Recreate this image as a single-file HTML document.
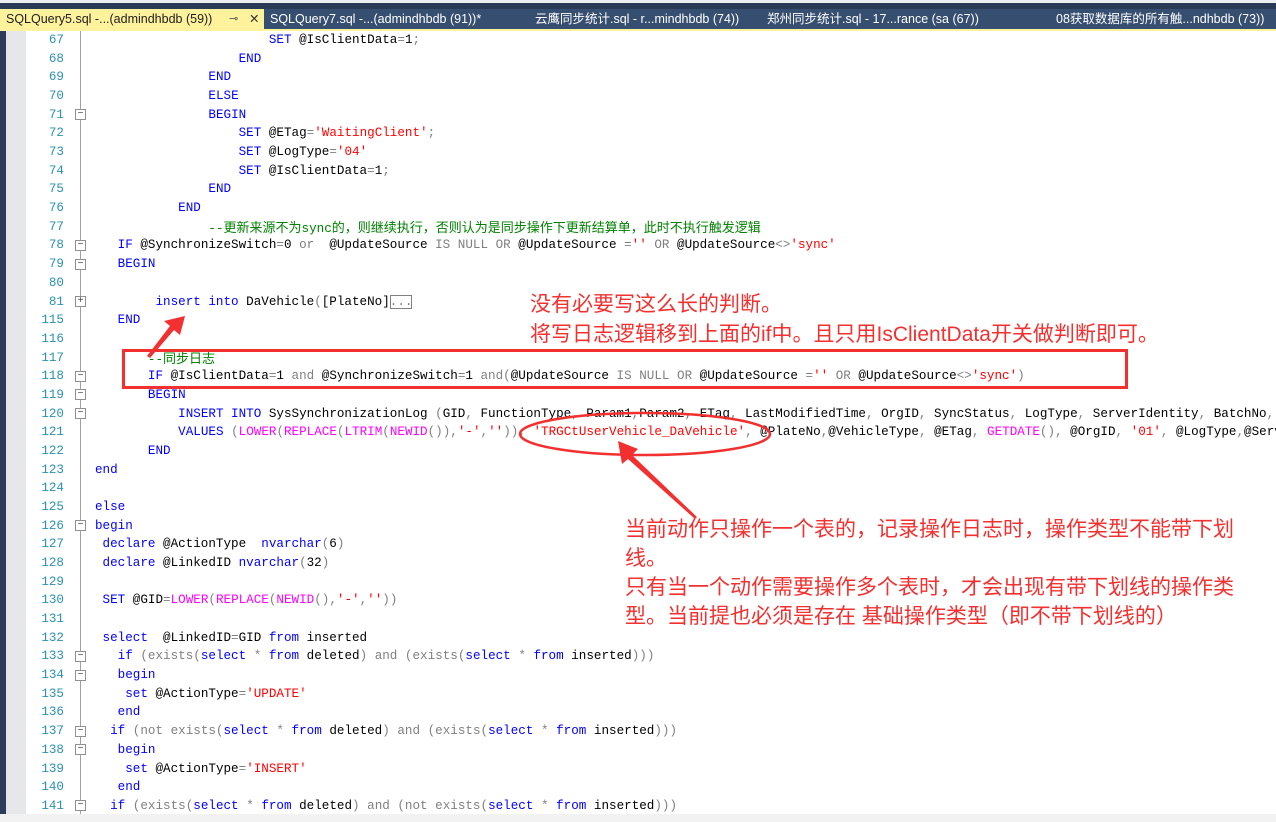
<!DOCTYPE html>
<html><head><meta charset="utf-8">
<style>
*{margin:0;padding:0;box-sizing:border-box}
html,body{width:1276px;height:822px;overflow:hidden;background:#fff}
body{position:relative;font-family:"Liberation Mono","Noto Sans CJK SC",monospace}
#top{position:absolute;left:0;top:0;width:1276px;height:3px;background:#eeeef2}
#nav{position:absolute;left:0;top:3px;width:1276px;height:6px;background:#293b56}
#tabs{position:absolute;left:0;top:9px;width:1276px;height:20px;background:#364e6f;font-family:"Liberation Sans","Noto Sans CJK SC",sans-serif;font-size:12.5px;color:#fff}
#tabs span{position:absolute;top:0;height:20px;line-height:20px;white-space:nowrap}
#act{position:absolute;left:0;top:0;width:264px;height:20px;background:#fff29d;color:#1e1e1e}
#yl{position:absolute;left:0;top:29px;width:1276px;height:2px;background:#fff29d}
#dark{position:absolute;left:0;top:31px;width:6px;height:783px;background:#2d3c5a}
#gut{position:absolute;left:6px;top:31px;width:20px;height:783px;background:#e6e7e8}
#bot{position:absolute;left:0;top:814px;width:1276px;height:8px;background:#f2f2f2}
#vl{position:absolute;left:80px;top:31px;width:1px;height:783px;background:#a0a0a0}
#code{position:absolute;left:0;top:0;width:1276px;height:814px;overflow:hidden}
.ln{position:absolute;left:26px;width:38px;text-align:right;color:#2b91af;font-size:12.6px;line-height:18px;font-family:"Liberation Mono",monospace}
.fb{position:absolute;left:75px;width:11px;height:11px;border:1px solid #909090;background:#fff;font-size:10px;line-height:8px;text-align:center;color:#444;font-family:"Liberation Sans",sans-serif}
.cl{position:absolute;left:95px;font-size:12.6px;line-height:18px;white-space:pre;color:#000}
.k{color:#0000ff}.g{color:#808080}.s{color:#ff0000}.f{color:#ff00ff}.c{color:#008000}
.cj{font-family:"Noto Sans CJK SC",sans-serif;font-size:13px}
.ann{position:absolute;font-family:"Liberation Sans","Noto Sans CJK SC",sans-serif;font-size:21px;color:#f2302f;white-space:nowrap;line-height:26px}
</style></head><body>
<div id="top"></div><div id="nav"></div>
<div id="tabs">
<div id="act"></div>
<span style="left:6px;color:#1e1e1e">SQLQuery5.sql -...(admindhbdb (59))</span>
<span style="left:229px;color:#555;font-size:11px">⊸</span>
<span style="left:249px;color:#333">✕</span>
<span style="left:270px">SQLQuery7.sql -...(admindhbdb (91))*</span>
<span style="left:535px">云鹰同步统计.sql - r...mindhbdb (74))</span>
<span style="left:767px">郑州同步统计.sql - 17...rance (sa (67))</span>
<span style="left:1056px">08获取数据库的所有触...ndhbdb (73))</span>
</div>
<div id="yl"></div>
<div id="dark"></div><div id="gut"></div>
<div id="vl"></div>
<div id="code"></div>
<div id="bot"></div>

<div class="ann" style="left:530px;top:292px">没有必要写这么长的判断。</div>
<div class="ann" style="left:530px;top:322px">将写日志逻辑移到上面的if中。且只用IsClientData开关做判断即可。</div>
<div class="ann" style="left:625px;top:517px">当前动作只操作一个表的，记录操作日志时，操作类型不能带下划</div>
<div class="ann" style="left:625px;top:546px">线。</div>
<div class="ann" style="left:625px;top:575px">只有当一个动作需要操作多个表时，才会出现有带下划线的操作类</div>
<div class="ann" style="left:625px;top:604px">型。当前提也必须是存在 基础操作类型（即不带下划线的）</div>

<svg style="position:absolute;left:0;top:0" width="1276" height="822">
<rect x="123.5" y="350.5" width="1003" height="37" fill="none" stroke="#f2302f" stroke-width="3"/>
<ellipse cx="645" cy="434" rx="125" ry="21" fill="none" stroke="#f2302f" stroke-width="2.5"/>
<polygon points="185,316 180,335 174,330 150,358 147,356 170,326 164,321" fill="#f2302f"/>
<polygon points="618,441 638,449 632,455 697,517 695,519 628,459 622,464" fill="#f2302f"/>
</svg>

<script>
const L=[
[67,23,'<span class="k">SET</span> @IsClientData<span class="g">=</span>1<span class="g">;</span>'],
[68,19,'<span class="k">END</span>'],
[69,15,'<span class="k">END</span>'],
[70,15,'<span class="k">ELSE</span>'],
[71,15,'<span class="k">BEGIN</span>','-'],
[72,19,'<span class="k">SET</span> @ETag<span class="g">=</span><span class="s">\'WaitingClient\'</span><span class="g">;</span>'],
[73,19,'<span class="k">SET</span> @LogType<span class="g">=</span><span class="s">\'04\'</span>'],
[74,19,'<span class="k">SET</span> @IsClientData<span class="g">=</span>1<span class="g">;</span>'],
[75,15,'<span class="k">END</span>'],
[76,11,'<span class="k">END</span>'],
[77,15,'<span class="c">--<span class="cj">更新来源不为</span>sync<span class="cj">的，则继续执行，否则认为是同步操作下更新结算单，此时不执行触发逻辑</span></span>'],
[78,3,'<span class="k">IF</span> @SynchronizeSwitch<span class="g">=</span>0 <span class="g">or</span>  @UpdateSource <span class="g">IS NULL OR</span> @UpdateSource <span class="g">=</span><span class="s">\'\'</span> <span class="g">OR</span> @UpdateSource<span class="g">&lt;&gt;</span><span class="s">\'sync\'</span>','-'],
[79,3,'<span class="k">BEGIN</span>','-'],
[80,0,''],
[81,8,'<span class="k">insert into</span> DaVehicle<span class="g">(</span>[PlateNo]<span style="outline:1px solid #808080;outline-offset:-1px;color:#808080">...</span>','+'],
[115,3,'<span class="k">END</span>'],
[116,0,''],
[117,7,'<span class="c">--<span class="cj">同步日志</span></span>'],
[118,7,'<span class="k">IF</span> @IsClientData<span class="g">=</span>1 <span class="g">and</span> @SynchronizeSwitch<span class="g">=</span>1 <span class="g">and(</span>@UpdateSource <span class="g">IS NULL OR</span> @UpdateSource <span class="g">=</span><span class="s">\'\'</span> <span class="g">OR</span> @UpdateSource<span class="g">&lt;&gt;</span><span class="s">\'sync\'</span><span class="g">)</span>','-'],
[119,7,'<span class="k">BEGIN</span>','-'],
[120,11,'<span class="k">INSERT INTO</span> SysSynchronizationLog <span class="g">(</span>GID<span class="g">,</span> FunctionType<span class="g">,</span> Param1<span class="g">,</span>Param2<span class="g">,</span> ETag<span class="g">,</span> LastModifiedTime<span class="g">,</span> OrgID<span class="g">,</span> SyncStatus<span class="g">,</span> LogType<span class="g">,</span> ServerIdentity<span class="g">,</span> BatchNo<span class="g">,</span>','-'],
[121,11,'<span class="k">VALUES</span> <span class="g">(</span><span class="f">LOWER</span><span class="g">(</span><span class="f">REPLACE</span><span class="g">(</span><span class="f">LTRIM</span><span class="g">(</span><span class="f">NEWID</span><span class="g">()),</span><span class="s">\'-\'</span><span class="g">,</span><span class="s">\'\'</span><span class="g">)),</span> <span class="s">\'TRGCtUserVehicle_DaVehicle\'</span><span class="g">,</span> @PlateNo<span class="g">,</span>@VehicleType<span class="g">,</span> @ETag<span class="g">,</span> <span class="f">GETDATE</span><span class="g">(),</span> @OrgID<span class="g">,</span> <span class="s">\'01\'</span><span class="g">,</span> @LogType<span class="g">,</span>@ServerIdentity'],
[122,7,'<span class="k">END</span>'],
[123,0,'<span class="k">end</span>'],
[124,0,''],
[125,0,'<span class="k">else</span>'],
[126,0,'<span class="k">begin</span>','-'],
[127,1,'<span class="k">declare</span> @ActionType  <span class="k">nvarchar</span><span class="g">(</span>6<span class="g">)</span>'],
[128,1,'<span class="k">declare</span> @LinkedID <span class="k">nvarchar</span><span class="g">(</span>32<span class="g">)</span>'],
[129,0,''],
[130,1,'<span class="k">SET</span> @GID<span class="g">=</span><span class="f">LOWER</span><span class="g">(</span><span class="f">REPLACE</span><span class="g">(</span><span class="f">NEWID</span><span class="g">(),</span><span class="s">\'-\'</span><span class="g">,</span><span class="s">\'\'</span><span class="g">))</span>'],
[131,0,''],
[132,1,'<span class="k">select</span>  @LinkedID<span class="g">=</span>GID <span class="k">from</span> inserted'],
[133,3,'<span class="k">if</span> <span class="g">(exists(</span><span class="k">select</span> <span class="g">*</span> <span class="k">from</span> deleted<span class="g">) and (exists(</span><span class="k">select</span> <span class="g">*</span> <span class="k">from</span> inserted<span class="g">)))</span>','-'],
[134,3,'<span class="k">begin</span>','-'],
[135,4,'<span class="k">set</span> @ActionType<span class="g">=</span><span class="s">\'UPDATE\'</span>'],
[136,3,'<span class="k">end</span>'],
[137,2,'<span class="k">if</span> <span class="g">(not exists(</span><span class="k">select</span> <span class="g">*</span> <span class="k">from</span> deleted<span class="g">) and (exists(</span><span class="k">select</span> <span class="g">*</span> <span class="k">from</span> inserted<span class="g">)))</span>','-'],
[138,3,'<span class="k">begin</span>','-'],
[139,4,'<span class="k">set</span> @ActionType<span class="g">=</span><span class="s">\'INSERT\'</span>'],
[140,3,'<span class="k">end</span>'],
[141,2,'<span class="k">if</span> <span class="g">(exists(</span><span class="k">select</span> <span class="g">*</span> <span class="k">from</span> deleted<span class="g">) and (not exists(</span><span class="k">select</span> <span class="g">*</span> <span class="k">from</span> inserted<span class="g">)))</span>','-']
];
let h='';
L.forEach((r,i)=>{
 const t=31+i*18.68;
 h+=`<div class="ln" style="top:${t}px">${r[0]}</div>`;
 if(r[3])h+=`<div class="fb" style="top:${t+3.5}px">${r[3]=='-'?'−':'+'}</div>`;
 h+=`<div class="cl" style="top:${t}px;left:${95+r[1]*7.56}px">${r[2]}</div>`;
});
document.getElementById('code').innerHTML=h;
</script>
</body></html>
